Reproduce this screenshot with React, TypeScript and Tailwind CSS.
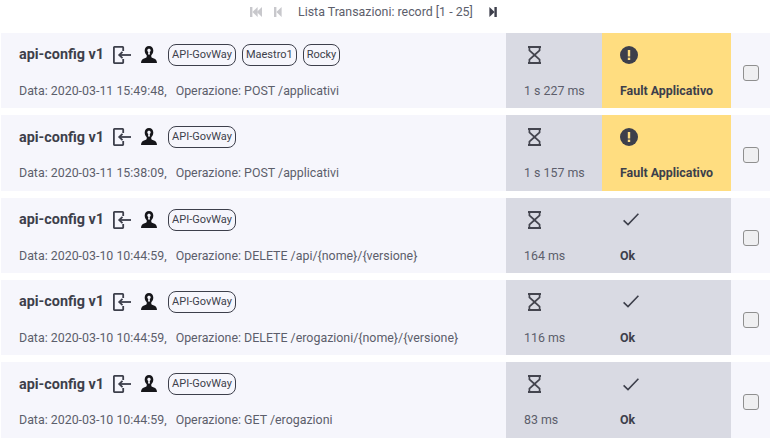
import React from 'react';

interface Transaction {
  date: string;
  operation: string;
  tags: string[];
  time: string;
  fault: boolean;
}

const transactions: Transaction[] = [
  { date: '2020-03-11 15:49:48', operation: 'POST /applicativi', tags: ['API-GovWay', 'Maestro1', 'Rocky'], time: '1 s 227 ms', fault: true },
  { date: '2020-03-11 15:38:09', operation: 'POST /applicativi', tags: ['API-GovWay'], time: '1 s 157 ms', fault: true },
  { date: '2020-03-10 10:44:59', operation: 'DELETE /api/{nome}/{versione}', tags: ['API-GovWay'], time: '164 ms', fault: false },
  { date: '2020-03-10 10:44:59', operation: 'DELETE /erogazioni/{nome}/{versione}', tags: ['API-GovWay'], time: '116 ms', fault: false },
  { date: '2020-03-10 10:44:59', operation: 'GET /erogazioni', tags: ['API-GovWay'], time: '83 ms', fault: false },
];

const PagerIcon = ({ dir, double, color }: { dir: 'left' | 'right'; double?: boolean; color: string }) => (
  <svg width={double ? 12 : 8} height="10" viewBox={double ? '0 0 12 10' : '0 0 8 10'} fill={color}>
    {dir === 'left' ? (
      <>
        <rect x="0" y="0" width="2.4" height="10" />
        <path d="M7.6 0v10L2.4 5z" />
        {double && <path d="M12 0v10L6.8 5z" />}
      </>
    ) : (
      <>
        <path d="M0.4 0v10l5.2-5z" />
        <rect x="5.4" y="0" width="2.4" height="10" />
      </>
    )}
  </svg>
);

const LoginIcon = () => (
  <svg width="18" height="18" viewBox="0 0 18 18" fill="none" stroke="#3d3f4b" strokeWidth="1.8">
    <path d="M10.2 5V1.4a.5.5 0 0 0-.5-.5H1.4a.5.5 0 0 0-.5.5v15.2a.5.5 0 0 0 .5.5h8.3a.5.5 0 0 0 .5-.5V13" />
    <path d="M18 9H6.5" />
    <path d="M9.5 5.8L6.2 9l3.3 3.2" />
  </svg>
);

const UserIcon = () => (
  <svg width="18" height="18" viewBox="0 0 18 18" fill="#16161a">
    <path
      fillRule="evenodd"
      d="M9 0c2.6 0 4.3 2 4.3 4.6 0 2-.8 3.7-2 4.7v1.4c0 .7 1 1.1 2.6 1.7 1.8.7 3 1.6 3.1 4.6H1c.1-3 1.3-3.9 3.1-4.6 1.6-.6 2.6-1 2.6-1.7V9.3c-1.2-1-2-2.7-2-4.7C4.7 2 6.4 0 9 0zM9 2.7c-1 0-1.7.7-1.7 1.6 0 .8.5 1.4 1 1.6L8 8.5h2l-.3-2.6c.5-.2 1-.8 1-1.6 0-.9-.7-1.6-1.7-1.6z"
    />
  </svg>
);

const HourglassIcon = () => (
  <svg width="13" height="18" viewBox="0 0 13 18" fill="none" stroke="#44454f" strokeWidth="1.7">
    <path d="M0 1h13M0 17h13" strokeWidth="2" />
    <path d="M1.4 1v3.4L6.5 9l5.1-4.6V1" />
    <path d="M1.4 17v-3.4L6.5 9l5.1 4.6V17" />
  </svg>
);

const FaultIcon = () => (
  <svg width="18" height="18" viewBox="0 0 18 18">
    <circle cx="9" cy="9" r="9" fill="#3d3f4b" />
    <rect x="7.8" y="4" width="2.4" height="6.5" fill="#ffdd80" />
    <rect x="7.8" y="11.6" width="2.4" height="2.4" fill="#ffdd80" />
  </svg>
);

const OkIcon = () => (
  <svg width="16" height="13" viewBox="0 0 16 13" fill="none" stroke="#3d3f4b" strokeWidth="1.6">
    <path d="M0.6 7.4l4.4 4.2L15.4 0.8" />
  </svg>
);

const Row = ({ item }: { item: Transaction }) => (
  <div className="flex h-[75.33px] ml-px bg-[#f6f6fc]">
    <div className="w-[505px] pl-[18px] pt-[11px]">
      <div className="flex items-center h-[22px]">
        <span className="text-[14.4px] font-bold text-[#3d3f4b]">api-config v1</span>
        <span className="ml-[9px] flex"><LoginIcon /></span>
        <span className="ml-[9px] flex"><UserIcon /></span>
        <div className="flex gap-[6px] ml-[10px]">
          {item.tags.map(tag => (
            <span key={tag} className="h-[22px] px-[3px] leading-[19px] border border-[#3d3f4b] rounded-[8px] text-[11px] text-[#3d3f4b]">
              {tag}
            </span>
          ))}
        </div>
      </div>
      <div className="mt-[16px] text-[12.4px] text-[#5c5e6b] whitespace-pre">
        Data: {item.date},<span className="ml-[9px]">Operazione: {item.operation}</span>
      </div>
    </div>
    <div className="w-[96px] bg-[#d9dae3] pl-[18px] pt-[13px]">
      <div className="flex h-[18px] pl-[4px]"><HourglassIcon /></div>
      <div className="mt-[18px] text-[12.4px] text-[#5c5e6b]">{item.time}</div>
    </div>
    <div className={`w-[129px] pl-[18px] pt-[13px] ${item.fault ? 'bg-[#ffdd80]' : 'bg-[#d9dae3]'}`}>
      <div className="h-[18px] flex items-center">{item.fault ? <FaultIcon /> : <span className="flex pl-[3px]"><OkIcon /></span>}</div>
      <div className="mt-[18px] text-[12.4px] font-bold text-[#3d3f4b]">{item.fault ? 'Fault Applicativo' : 'Ok'}</div>
    </div>
    <div className="flex-1 pl-[12px] pt-[32px]">
      <span className="block w-[16px] h-[16px] rounded-[3px] border border-[#8f8f8f] bg-[#efeff1]" />
    </div>
  </div>
);

export default function App() {
  return (
    <div className="w-[770px] h-[438px] overflow-hidden bg-white font-['Roboto',sans-serif]">
      <div className="flex items-center h-[33px] pl-[250px] pb-[9px]">
        <PagerIcon dir="left" double color="#c8c8cc" />
        <span className="ml-[12px] flex"><PagerIcon dir="left" color="#c8c8cc" /></span>
        <span className="ml-[16px] text-[12.4px] text-[#5c5e6b]">Lista Transazioni: record [1 - 25]</span>
        <span className="ml-[16px] flex"><PagerIcon dir="right" color="#3d3f4b" /></span>
      </div>
      <div className="flex flex-col gap-[7px]">
        {transactions.map((item, i) => (
          <Row key={i} item={item} />
        ))}
      </div>
    </div>
  );
}
